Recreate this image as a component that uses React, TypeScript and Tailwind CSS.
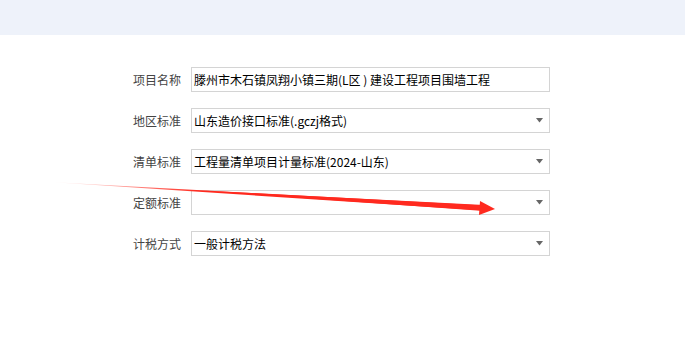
const rows = [
  { label: "项目名称", value: "滕州市木石镇凤翔小镇三期(L区 ) 建设工程项目围墙工程", select: false },
  { label: "地区标准", value: "山东造价接口标准(.gczj格式)", select: true },
  { label: "清单标准", value: "工程量清单项目计量标准(2024-山东)", select: true },
  { label: "定额标准", value: "", select: true },
  { label: "计税方式", value: "一般计税方法", select: true },
];

export default function App() {
  return (
    <div
      className="relative h-[359px] w-[685px] overflow-hidden bg-white"
      style={{ fontFamily: '"Microsoft YaHei", "Noto Sans CJK SC", sans-serif' }}
    >
      <div className="h-[35px] bg-[#eef2fa]" />
      <div className="flex flex-col gap-[16px] pt-[32px]">
        {rows.map((row) => (
          <div key={row.label} className="flex items-center">
            <div className="w-[191px] pr-[10px] text-right text-[12px] text-[#444]">{row.label}</div>
            <div className="flex h-[25px] w-[359px] items-center border border-[#d4d4d4] bg-white pl-[2px] pr-[6px]">
              <span className="flex-1 whitespace-nowrap text-[12px] text-black">{row.value}</span>
              {row.select ? (
                <svg width="7" height="5" viewBox="0 0 7 5">
                  <path d="M0 0 H7 L3.5 4.5 Z" fill="#666" />
                </svg>
              ) : null}
            </div>
          </div>
        ))}
      </div>
      <svg className="pointer-events-none absolute left-0 top-0" width="685" height="359">
        <defs>
          <linearGradient id="fade" x1="50" y1="0" x2="200" y2="0" gradientUnits="userSpaceOnUse">
            <stop offset="0" stopColor="#ff2a1f" stopOpacity="0" />
            <stop offset="1" stopColor="#ff2a1f" stopOpacity="1" />
          </linearGradient>
        </defs>
        <path d="M50 182 L484 205.5 L484 210.5 Z" fill="url(#fade)" />
        <path d="M200 190.5 L484 205 L484 211 Z" fill="#ff2a1f" />
        <path d="M480 201 L495 209 L479 215 Z" fill="#ff2a1f" />
      </svg>
    </div>
  );
}
